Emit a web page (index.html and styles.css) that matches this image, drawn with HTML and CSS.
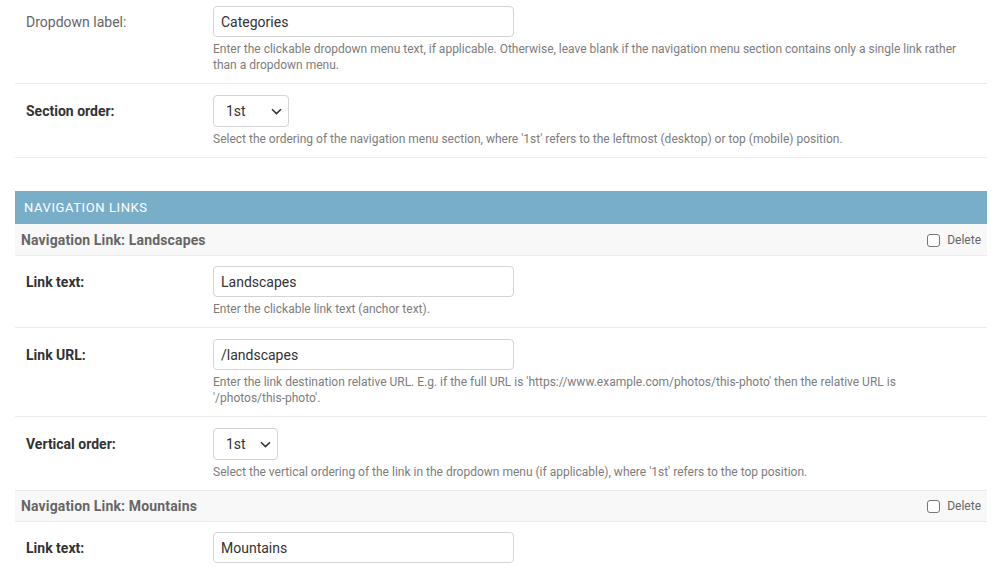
FILE: index.html
```html
<!DOCTYPE html>
<html lang="en">
<head>
<meta charset="utf-8">
<title>Navigation menu section</title>
<link rel="stylesheet" href="styles.css">
</head>
<body>
<div class="page">
  <div class="module">
    <div class="form-row first">
      <div class="label">Dropdown label:</div>
      <div class="field">
        <div class="input">Categories</div>
        <div class="help">Enter the clickable dropdown menu text, if applicable. Otherwise, leave blank if the navigation menu section contains only a single link rather than a dropdown menu.</div>
      </div>
    </div>
    <div class="form-row">
      <div class="label required">Section order:</div>
      <div class="field">
        <div class="select w76"><span>1st</span><svg width="11" height="7" viewBox="0 0 11 7"><path d="M1 1.2 L5.5 5.6 L10 1.2" fill="none" stroke="#333" stroke-width="1.5"/></svg></div>
        <div class="help">Select the ordering of the navigation menu section, where '1st' refers to the leftmost (desktop) or top (mobile) position.</div>
      </div>
    </div>
  </div>

  <div class="inline-group">
    <h2 class="group-title">Navigation links</h2>

    <div class="inline">
      <h3 class="inline-title"><span>Navigation Link: Landscapes</span><span class="delete"><span class="checkbox"></span>Delete</span></h3>
      <div class="form-row">
        <div class="label required">Link text:</div>
        <div class="field">
          <div class="input">Landscapes</div>
          <div class="help">Enter the clickable link text (anchor text).</div>
        </div>
      </div>
      <div class="form-row">
        <div class="label required">Link URL:</div>
        <div class="field">
          <div class="input">/landscapes</div>
          <div class="help">Enter the link destination relative URL. E.g. if the full URL is 'https://www.example.com/photos/this-photo' then the relative URL is <span class="nowrap">'/photos/this-photo'.</span></div>
        </div>
      </div>
      <div class="form-row last">
        <div class="label required">Vertical order:</div>
        <div class="field">
          <div class="select w65"><span>1st</span><svg width="11" height="7" viewBox="0 0 11 7"><path d="M1 1.2 L5.5 5.6 L10 1.2" fill="none" stroke="#333" stroke-width="1.5"/></svg></div>
          <div class="help">Select the vertical ordering of the link in the dropdown menu (if applicable), where '1st' refers to the top position.</div>
        </div>
      </div>
    </div>

    <div class="inline">
      <h3 class="inline-title bordered"><span>Navigation Link: Mountains</span><span class="delete"><span class="checkbox"></span>Delete</span></h3>
      <div class="form-row">
        <div class="label required">Link text:</div>
        <div class="field">
          <div class="input">Mountains</div>
        </div>
      </div>
    </div>
  </div>
</div>
</body>
</html>
```

FILE: styles.css
```css
html, body {
  margin: 0;
  padding: 0;
  background: #fff;
}

body {
  font-family: Roboto, "Liberation Sans", Arial, sans-serif;
  color: #333;
  overflow: hidden;
}

.page {
  width: 972px;
  margin-left: 15px;
}

.form-row {
  display: flex;
  padding: 11px 10px 10px 11px;
  border-bottom: 1px solid #ebebeb;
}

.form-row.first {
  padding-top: 6px;
}

.inline-title + .form-row {
  padding-top: 10px;
}

.form-row.last {
  border-bottom: none;
}

.label {
  width: 187px;
  flex-shrink: 0;
  font-size: 14px;
  line-height: 16px;
  padding-top: 8px;
  color: #666;
}

.label.required {
  font-weight: bold;
  color: #333;
}

.field {
  flex: 1;
  min-width: 0;
}

.input {
  box-sizing: border-box;
  width: 301px;
  height: 31px;
  border: 1px solid #d4d4d4;
  border-radius: 4px;
  padding: 1px 7px 0;
  font-size: 14px;
  line-height: 28px;
  color: #333;
}

.select {
  box-sizing: border-box;
  height: 32px;
  border: 1px solid #d4d4d4;
  border-radius: 4px;
  padding: 0 6px 0 12px;
  display: flex;
  align-items: center;
  justify-content: space-between;
  font-size: 14px;
  color: #333;
}

.select.w76 { width: 76px; }
.select.w65 { width: 65px; }

.help {
  font-size: 12px;
  line-height: 16px;
  color: #7d7d7d;
  padding-top: 4px;
}

.nowrap {
  white-space: nowrap;
}

.inline-group {
  margin-top: 33px;
}

.group-title {
  margin: 0;
  background: #79aec8;
  color: #fff;
  font-size: 13px;
  font-weight: normal;
  text-transform: uppercase;
  letter-spacing: 0.6px;
  line-height: 17px;
  padding: 8px 9px;
}

.inline-title {
  margin: 0;
  display: flex;
  justify-content: space-between;
  align-items: center;
  background: #f8f8f8;
  color: #666;
  font-size: 14px;
  font-weight: bold;
  letter-spacing: 0.15px;
  line-height: 16px;
  padding: 8px 6px 7px;
  border-bottom: 1px solid #ebebeb;
}

.inline-title.bordered {
  padding: 7px 6px;
  border-top: 1px solid #ebebeb;
}

.delete {
  display: flex;
  align-items: center;
  gap: 7px;
  font-size: 12px;
  font-weight: normal;
  letter-spacing: 0;
  color: #666;
}

.checkbox {
  display: inline-block;
  box-sizing: border-box;
  width: 13px;
  height: 13px;
  border: 1px solid #777;
  border-radius: 3px;
  background: #fff;
}
```
